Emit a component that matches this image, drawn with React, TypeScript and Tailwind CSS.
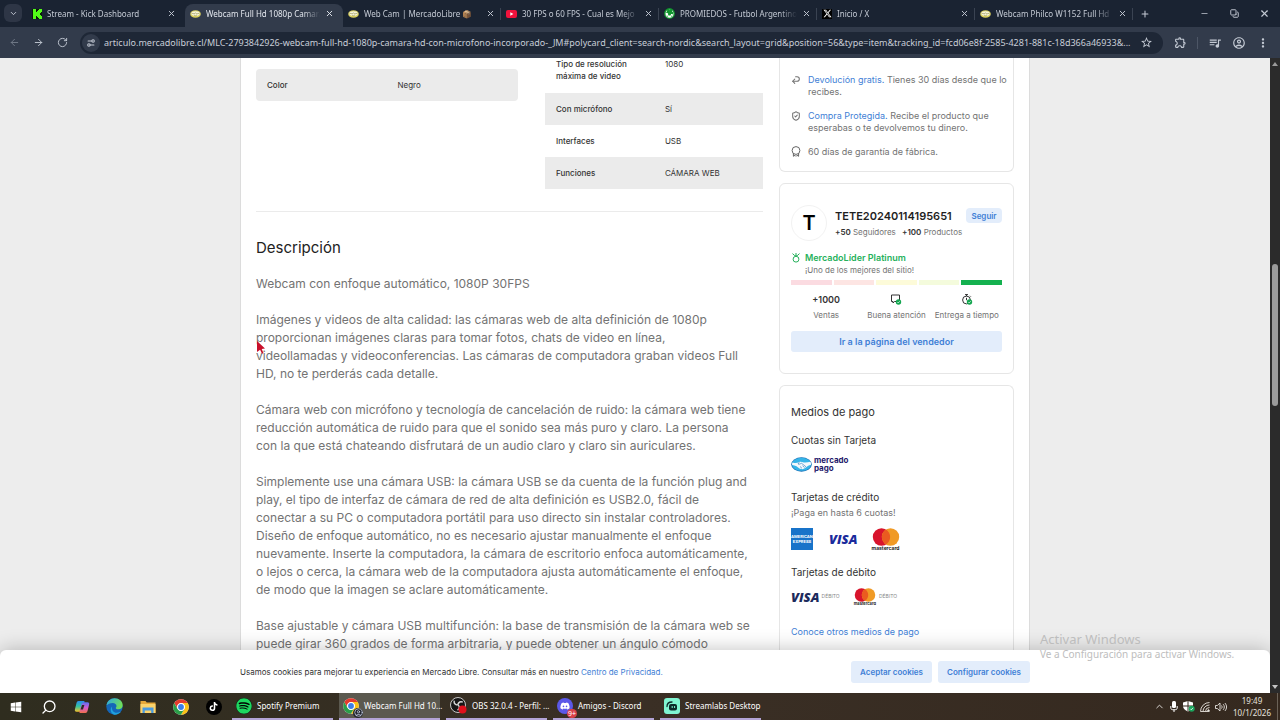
import React from 'react';
import { ArrowLeft, ArrowRight, ChevronDown, ChevronUp, CircleUser, Copy, Minus, Plus, RotateCw, Search, Settings2, ShieldCheck, Undo2, X } from 'lucide-react';
import { FaDiscord, FaSpotify, FaTiktok, FaWindows, FaXTwitter } from 'react-icons/fa6';
import { MdMoreVert, MdOutlineAccountCircle, MdOutlineExtension, MdQueueMusic, MdStarOutline } from 'react-icons/md';

const uiFont = "font-['Noto_Sans','Open_Sans',sans-serif]";
const pageFont = "font-['Inter',sans-serif]";

// ---------- icons ----------

function KickIcon() {
  return (
    <svg viewBox="0 0 10 10" className="size-[10px] shrink-0">
      <rect width="10" height="10" fill="#0b1a0c" />
      <path d="M1 0h3v3h1V2h1V1h1V0h3v3H9v1H8v2h1v1h1v3H7V9H6V8H5V7H4v3H1z" fill="#53fc18" />
    </svg>
  );
}

function MeliIcon() {
  return (
    <svg viewBox="0 0 11 8" className="h-2 w-[11px] shrink-0">
      <ellipse cx="5.5" cy="4" rx="5.3" ry="3.8" fill="#d8cf5e" />
      <ellipse cx="5.5" cy="3.6" rx="4.2" ry="2.3" fill="#f5f3d8" />
      <path d="M1.5 3.2l2.6.6 1.3-.8 1.5.9 2.6-.7M4 5l1.2.8L7 5" stroke="#8d8a4a" strokeWidth=".6" fill="none" />
    </svg>
  );
}

function YoutubeIcon() {
  return (
    <svg viewBox="0 0 11 8" className="h-2 w-[11px] shrink-0">
      <rect width="11" height="8" rx="2" fill="#f0123c" />
      <path d="M4.3 2.2v3.6L7.4 4z" fill="#fff" />
    </svg>
  );
}

function BallIcon() {
  return (
    <svg viewBox="0 0 11 11" className="size-[11px] shrink-0">
      <circle cx="5.5" cy="5.5" r="5.4" fill="#11962f" />
      <circle cx="5.5" cy="5.8" r="4" fill="#fff" />
      <path d="M5.5 4l1.8 1.3-.7 2.1H4.4l-.7-2.1zM1.5 4.5l1.5-1 .2-1.8 1.6-.4.7 1 .9-1 1.6.5.1 1.7 1.3 1-.5 2 -.9-.6M2 8l1.4-.6.9 1.7M6.8 9.1l.7-1.5 1.5.4" fill="#11962f" />
    </svg>
  );
}

function XIcon() {
  return (
    <span className="flex size-[10px] shrink-0 items-center justify-center bg-black text-white">
      <FaXTwitter size={9} />
    </span>
  );
}

function CopilotIcon() {
  return (
    <svg viewBox="0 0 16 16" className="size-4">
      <defs>
        <linearGradient id="cop1" x1="0" y1="0" x2="0" y2="1">
          <stop offset="0" stopColor="#2a8bf0" />
          <stop offset=".5" stopColor="#35c4a0" />
          <stop offset="1" stopColor="#f2c02c" />
        </linearGradient>
        <linearGradient id="cop2" x1="0" y1="0" x2="0" y2="1">
          <stop offset="0" stopColor="#5a6ff0" />
          <stop offset=".5" stopColor="#d65bd0" />
          <stop offset="1" stopColor="#f0704a" />
        </linearGradient>
      </defs>
      <path d="M4.5 2h5c1 0 1.300.6 1 1.500L8.300 11c-.4 1.200-1 1.700-2 1.700H2.500C1 12.700.5 11.700 1 10l1.500-6c.3-1.300 1-2 2-2z" fill="url(#cop1)" />
      <path d="M9.700 3.300h3.800c1.500 0 2 1 1.500 2.700l-1.500 6c-.3 1.300-1 2-2 2h-5c-1 0-1.300-.6-1-1.500L7.700 5c.4-1.200 1-1.700 2-1.700z" fill="url(#cop2)" />
      <path d="M8 6h2.400L9 10.500H6.500z" fill="#2f2d22" />
    </svg>
  );
}

function EdgeIcon() {
  return (
    <svg viewBox="0 0 17 17" className="size-[17px]">
      <defs>
        <linearGradient id="edge" x1="0" y1="0" x2="1" y2=".4">
          <stop offset="0" stopColor="#2aa7e8" />
          <stop offset="1" stopColor="#6fdc5a" />
        </linearGradient>
      </defs>
      <circle cx="8.500" cy="8.500" r="8.200" fill="#1466b8" />
      <path d="M.4 7.600C1 3.200 4.400.3 8.600.3c4.600 0 8.100 3.200 8.100 6.900 0 2.400-1.900 4-4.200 4-1.700 0-2.700-.7-2.700-1.300 0-.5.7-.8.7-1.900 0-1.600-1.500-3-3.700-3C3.900 5 1.400 6.300.4 7.600z" fill="url(#edge)" />
      <path d="M6 8.500c-.6 3.500 1.500 6.300 4.700 6.300 1.700 0 3.200-.5 4.300-1.200-1.500 2.300-4 3.300-6.500 3.100C4.900 16.300 3.500 11 6 8.500z" fill="#1fa2dd" />
    </svg>
  );
}

function FolderIcon() {
  return (
    <svg viewBox="0 0 16 14" className="h-[14px] w-4">
      <path d="M.5 1h5l1.200 1.500H15.500V13H.5z" fill="#e6a93a" />
      <path d="M.5 4h15v9H.5z" fill="#fad36c" />
      <path d="M2.500 7.500h11V13h-2.300v-2.500H4.800V13H2.500z" fill="#4a9be0" />
    </svg>
  );
}

function ChromeIcon() {
  return (
    <svg viewBox="0 0 16 16" className="size-4">
      <circle cx="8" cy="8" r="7.800" fill="#fff" />
      <path d="M1.250 4.100A7.800 7.800 0 0 1 14.750 4.100H8A3.900 3.900 0 0 0 4.620 9.950z" fill="#e33b2e" />
      <path d="M14.750 4.100A7.800 7.800 0 0 1 8 15.800l3.380-5.850A3.900 3.900 0 0 0 8 4.100z" fill="#fbc116" />
      <path d="M1.250 4.100l3.370 5.850a3.900 3.900 0 0 0 6.760 0L8 15.800A7.800 7.800 0 0 1 1.250 4.100z" fill="#2b9e49" />
      <circle cx="8" cy="8" r="3.700" fill="#fff" />
      <circle cx="8" cy="8" r="2.900" fill="#3b7fe8" />
    </svg>
  );
}

function ChromeProfileIcon() {
  return (
    <span className="relative block">
      <ChromeIcon />
      <span className="absolute -right-1 -bottom-1 flex size-[10px] items-center justify-center rounded-full bg-[#20242c] text-[#c9d3e6]">
        <CircleUser size={9} strokeWidth={2} />
      </span>
    </span>
  );
}

function ObsIcon() {
  return (
    <svg viewBox="0 0 17 17" className="size-[17px]">
      <circle cx="8" cy="8" r="7.500" fill="#161616" stroke="#d8d8d8" strokeWidth=".9" />
      <path d="M4.200 3.600c-.5 2.600 1 4.300 3.400 4.500M12.800 5.200C10.600 4 8.500 5 7.700 7.800M7.500 13c2.200-1 2.400-3.200.7-5" fill="none" stroke="#d8d8d8" strokeWidth="1.400" />
      <circle cx="12.500" cy="12.500" r="4" fill="#e0101c" />
    </svg>
  );
}

function DiscordIcon() {
  return (
    <span className="relative flex size-4 items-center justify-center rounded-full bg-[#5b58e8] text-white">
      <FaDiscord size={10} />
      <span className="absolute -right-1 -bottom-1 flex h-[9px] w-[10px] items-center justify-center rounded-full bg-[#d8404a] text-[7px] leading-none">
        9+
      </span>
    </span>
  );
}

function StreamlabsIcon() {
  return (
    <svg viewBox="0 0 16 16" className="size-4">
      <rect width="16" height="16" rx="3" fill="#80f5d2" />
      <rect x="5" y="6" width="8" height="6.500" rx="2" fill="#0c2a2a" />
      <path d="M3 8.500C3 5.500 5 4 8 4" fill="none" stroke="#0c2a2a" strokeWidth="1.300" strokeLinecap="round" />
      <path d="M8.200 8v2M10.600 8v2" stroke="#80f5d2" strokeWidth="1" />
    </svg>
  );
}

function WarrantyIcon() {
  return (
    <svg viewBox="0 0 10 11" className="h-[11px] w-[10px] shrink-0" fill="none" stroke="#666" strokeWidth="1">
      <circle cx="5" cy="4.500" r="3.900" />
      <path d="M2.400 7.500v2.800l1.600-1 .6 1M7.600 7.500v2.800l-1.600-1-.6 1" />
    </svg>
  );
}

function MedalIcon() {
  return (
    <svg viewBox="0 0 8 10" className="mt-px h-[10px] w-2 shrink-0" fill="none" stroke="#27b15c" strokeWidth="1">
      <circle cx="4" cy="6.200" r="2.900" />
      <path d="M.5.600L2.800 2.700H5.200L7.500.6M3 1h2" />
    </svg>
  );
}

function CheckBadge() {
  return (
    <>
      <circle cx="8.500" cy="8" r="2.700" fill="#14a650" />
      <path d="M7.300 8l.9.9 1.500-1.600" fill="none" stroke="#fff" strokeWidth=".7" />
    </>
  );
}

function ServiceIcon() {
  return (
    <svg viewBox="0 0 12 11" className="h-[11px] w-3">
      <path d="M1.500 1h8v6.500H4.500L3 9V7.500H1.500z" fill="none" stroke="#333" strokeWidth="1" />
      <CheckBadge />
    </svg>
  );
}

function TimeIcon() {
  return (
    <svg viewBox="0 0 12 11" className="h-[11px] w-3">
      <g fill="none" stroke="#333" strokeWidth="1">
        <circle cx="5.500" cy="6" r="3.900" />
        <path d="M4 .6h3M5.500.6v1.500M5.500 3.800v2.400M9 1.800l.8.8" />
      </g>
      <CheckBadge />
    </svg>
  );
}

function MercadoPagoLogo() {
  return (
    <div className="flex items-center gap-[2px] text-[#1f1a6b]">
      <svg viewBox="0 0 21 15" className="h-[15px] w-[21px]">
        <ellipse cx="10.500" cy="7.500" rx="10.300" ry="7.200" fill="#1b6fb5" />
        <ellipse cx="10.500" cy="7.300" rx="9.600" ry="6.500" fill="#35b4e8" />
        <path d="M1.500 5.400c3 .9 4.500.5 6.800-.4 1.500-.5 3 .3 4.500.5 2.200.3 4.300-.2 6.600-.7.8 1.300.8 2.500.4 3.200-2 .2-3.300 1.300-4.700 2.300-1.500 1.200-2.800 2-4.600 1.800C8 12 7.500 10.500 5.500 9.300 4 8.600 2.500 8.300 1.200 8c-.3-1 0-2 .3-2.600z" fill="#f3f8fc" />
        <path d="M8.300 5.200L7 7c1.500.7 2.600-.5 3.600-.7L15 9.800M9 9.500l2 1.800M11.500 8.600l2 2" fill="none" stroke="#1b6fb5" strokeWidth=".6" />
      </svg>
      <div className="flex flex-col text-[8px] leading-[8px] font-bold">
        <span>mercado</span>
        <span>pago</span>
      </div>
    </div>
  );
}

function MastercardCircles({ className }: { className: string }) {
  return (
    <svg viewBox="0 0 28 18" className={className}>
      <circle cx="9.500" cy="9" r="8.700" fill="#d8142c" />
      <circle cx="18.500" cy="9" r="8.700" fill="#f09a25" />
      <path d="M14 1.600a8.700 8.700 0 0 1 0 14.800 8.700 8.700 0 0 1 0-14.800z" fill="#ea5b20" />
    </svg>
  );
}

// ---------- browser ----------

const tabs = [
  { title: 'Stream - Kick Dashboard', icon: <KickIcon /> },
  { title: 'Webcam Full Hd 1080p Camara', icon: <MeliIcon />, active: true },
  { title: 'Web Cam | MercadoLibre 📦', icon: <MeliIcon /> },
  { title: '30 FPS o 60 FPS - Cual es Mejo', icon: <YoutubeIcon /> },
  { title: 'PROMIEDOS - Futbol Argentino', icon: <BallIcon /> },
  { title: 'Inicio / X', icon: <XIcon /> },
  { title: 'Webcam Philco W1152 Full Hd', icon: <MeliIcon /> },
];

function TabStrip() {
  return (
    <div className="flex h-[27px] items-stretch bg-[#1a2332] pr-px pl-1 text-[#c4cad4]">
      <button aria-label="Buscar pestañas" className="mt-1 mr-[5px] flex size-[18px] items-center justify-center rounded-md bg-[#2e3646]">
        <ChevronDown size={9} strokeWidth={2.500} />
      </button>
      <div className="flex min-w-0 flex-1">
        {tabs.map((tab, i) => (
          <div
            key={tab.title}
            className={
              tab.active
                ? 'mt-1 flex max-w-[158px] min-w-0 flex-1 items-center gap-[5px] rounded-t-lg bg-[#323b4b] pr-[9px] pb-1 pl-[5px] text-[#e3e7ee]'
                : 'mt-1 flex max-w-[158px] min-w-0 flex-1 items-center gap-[5px] pr-[9px] pb-1 pl-[5px]'
            }
          >
            {tab.icon}
            <span className="min-w-0 flex-1 overflow-hidden mask-r-from-85% text-[8px] leading-[14px] whitespace-nowrap">
              {tab.title}
            </span>
            <button aria-label="Cerrar pestaña">
              <X size={9} strokeWidth={2.500} />
            </button>
            {i > 1 && <span className="-mr-[9px] h-3 w-px bg-[#3a4352]" />}
          </div>
        ))}
        <button aria-label="Nueva pestaña" className="ml-1 flex w-4 items-center justify-center">
          <Plus size={10} strokeWidth={2.500} />
        </button>
      </div>
      <div className="flex">
        <button aria-label="Minimizar" className="flex w-[30px] items-center justify-center"><Minus size={9} /></button>
        <button aria-label="Restaurar" className="flex w-[30px] items-center justify-center"><Copy size={9} strokeWidth={2.500} className="-scale-x-100 rotate-90" /></button>
        <button aria-label="Cerrar" className="flex w-[30px] items-center justify-center"><X size={11} strokeWidth={2.500} /></button>
      </div>
    </div>
  );
}

function Toolbar() {
  return (
    <div className="flex h-[31px] items-center bg-[#323b4b] pr-[9px] text-[#c4cad4]">
      <button aria-label="Atrás" className="flex w-7 justify-center text-[#737c8a]"><ArrowLeft size={11} /></button>
      <button aria-label="Adelante" className="flex w-5 justify-center"><ArrowRight size={11} /></button>
      <button aria-label="Recargar" className="flex w-7 justify-center"><RotateCw size={11} /></button>
      <div className="ml-1 flex h-[22px] min-w-0 flex-1 items-center rounded-full bg-[#1e2736] pr-[10px] pl-[2px]">
        <button aria-label="Información del sitio" className="flex size-[18px] shrink-0 items-center justify-center rounded-full bg-[#323b4b]">
          <Settings2 size={10} strokeWidth={2.500} className="-scale-y-100" />
        </button>
        <input
          aria-label="Dirección"
          className="ml-1 min-w-0 flex-1 truncate bg-transparent text-[9px] text-[#c9ced8] outline-none"
          defaultValue="articulo.mercadolibre.cl/MLC-2793842926-webcam-full-hd-1080p-camara-hd-con-microfono-incorporado-_JM#polycard_client=search-nordic&search_layout=grid&position=56&type=item&tracking_id=fcd06e8f-2585-4281-881c-18d366a46933&..."
        />
        <button aria-label="Favorito" className="ml-2"><MdStarOutline size={13} /></button>
      </div>
      <button aria-label="Extensiones" className="ml-[9px] flex w-4 justify-center"><MdOutlineExtension size={13} /></button>
      <span className="mx-[9px] h-3 w-px bg-[#4d5666]" />
      <button aria-label="Multimedia" className="flex w-4 justify-center"><MdQueueMusic size={14} /></button>
      <button aria-label="Perfil" className="ml-2 flex w-4 justify-center"><MdOutlineAccountCircle size={14} /></button>
      <button aria-label="Menú" className="ml-2 flex w-4 justify-center"><MdMoreVert size={14} /></button>
    </div>
  );
}

// ---------- page ----------

function Specs() {
  const rows = [
    ['Con micrófono', 'Sí'],
    ['Interfaces', 'USB'],
    ['Funciones', 'CÁMARA WEB'],
  ];
  return (
    <div className="flex items-start justify-between border-b border-[#ebebeb] pb-[22px] text-[8px] leading-3 text-[#333]">
      <table className="mt-[11px] w-[262px] table-fixed">
        <tbody>
          <tr className="h-8 bg-[#ebebeb]">
            <th scope="row" className="w-[54%] rounded-l-sm pl-[11px] text-left font-medium">Color</th>
            <td className="rounded-r-sm">Negro</td>
          </tr>
        </tbody>
      </table>
      <table className="w-[218px] table-fixed">
        <tbody>
          <tr className="h-[35px] align-top">
            <th scope="row" className="w-[55%] pl-[11px] text-left font-medium">Tipo de resolución<br />máxima de video</th>
            <td>1080</td>
          </tr>
          {rows.map(([name, value]) => (
            <tr key={name} className="h-8 odd:bg-white even:bg-[#ebebeb]">
              <th scope="row" className="pl-[11px] text-left font-medium">{name}</th>
              <td>{value}</td>
            </tr>
          ))}
        </tbody>
      </table>
    </div>
  );
}

const description = `Webcam con enfoque automático, 1080P 30FPS

Imágenes y videos de alta calidad: las cámaras web de alta definición de 1080p
proporcionan imágenes claras para tomar fotos, chats de video en línea,
videollamadas y videoconferencias. Las cámaras de computadora graban videos Full
HD, no te perderás cada detalle.

Cámara web con micrófono y tecnología de cancelación de ruido: la cámara web tiene
reducción automática de ruido para que el sonido sea más puro y claro. La persona
con la que está chateando disfrutará de un audio claro y claro sin auriculares.

Simplemente use una cámara USB: la cámara USB se da cuenta de la función plug and
play, el tipo de interfaz de cámara de red de alta definición es USB2.0, fácil de
conectar a su PC o computadora portátil para uso directo sin instalar controladores.
Diseño de enfoque automático, no es necesario ajustar manualmente el enfoque
nuevamente. Inserte la computadora, la cámara de escritorio enfoca automáticamente,
o lejos o cerca, la cámara web de la computadora ajusta automáticamente el enfoque,
de modo que la imagen se aclare automáticamente.

Base ajustable y cámara USB multifunción: la base de transmisión de la cámara web se
puede girar 360 grados de forma arbitraria, y puede obtener un ángulo cómodo`;

function Benefits() {
  return (
    <ul className="flex flex-col gap-3 rounded-b-md border border-t-0 border-[#e6e6e6] px-[11px] pt-4 pb-[13px] text-[9px] leading-3 whitespace-nowrap text-[#737373]">
      <li className="flex gap-[7px]">
        <Undo2 size={10} strokeWidth={2.500} className="mt-px shrink-0 -scale-y-100" />
        <p><a href="#devolucion" className="text-[#3f7fd6]">Devolución gratis.</a> Tienes 30 días desde que lo<br />recibes.</p>
      </li>
      <li className="flex gap-[7px]">
        <ShieldCheck size={10} strokeWidth={2.500} className="mt-px shrink-0" />
        <p><a href="#compra" className="text-[#3f7fd6]">Compra Protegida.</a> Recibe el producto que<br />esperabas o te devolvemos tu dinero.</p>
      </li>
      <li className="flex gap-[7px]">
        <WarrantyIcon />
        <p>60 días de garantía de fábrica.</p>
      </li>
    </ul>
  );
}

function Seller() {
  return (
    <section className="rounded-md border border-[#e6e6e6] px-[11px] pt-[21px] pb-[21px] text-[8px] text-[#737373]">
      <div className="flex items-start">
        <div className="flex size-9 shrink-0 items-center justify-center rounded-full border border-[#f2f2f2] text-[20px] font-semibold text-black">T</div>
        <div className="ml-2 flex-1">
          <h2 className="pt-[3px] text-[11px] leading-4 font-semibold text-[#1f1f1f]">TETE20240114195651</h2>
          <p className="pt-[2px] leading-3 whitespace-nowrap">
            <b className="font-semibold text-[#333]">+50</b> Seguidores <b className="ml-1 font-semibold text-[#333]">+100</b> Productos
          </p>
        </div>
        <button className="mt-[3px] h-[15px] w-9 rounded-sm bg-[#e3edfb] text-[8px] font-semibold text-[#3f7fd6]">Seguir</button>
      </div>
      <div className="mt-[11px] flex gap-[5px] pl-px">
        <MedalIcon />
        <div>
          <p className="text-[9px] leading-3 font-semibold text-[#27b15c]">MercadoLíder Platinum</p>
          <p className="leading-3">¡Uno de los mejores del sitio!</p>
        </div>
      </div>
      <div className="mt-1 grid h-[5px] grid-cols-5 gap-[2px]">
        <span className="bg-[#fbdbe1]" />
        <span className="bg-[#fde5e3]" />
        <span className="bg-[#fdfbd9]" />
        <span className="bg-[#f4fbdc]" />
        <span className="bg-[#14b14f]" />
      </div>
      <dl className="mt-2 grid grid-cols-3 text-center leading-3">
        <div>
          <dt className="flex h-[13px] items-center justify-center text-[9px] font-semibold text-[#333]">+1000</dt>
          <dd className="mt-[3px]">Ventas</dd>
        </div>
        <div>
          <dt className="flex h-[13px] items-center justify-center"><ServiceIcon /></dt>
          <dd className="mt-[3px]">Buena atención</dd>
        </div>
        <div>
          <dt className="flex h-[13px] items-center justify-center"><TimeIcon /></dt>
          <dd className="mt-[3px]">Entrega a tiempo</dd>
        </div>
      </dl>
      <button className="mt-[10px] h-[21px] w-full rounded-[3px] bg-[#e3edfb] text-[9px] font-semibold text-[#3f7fd6]">Ir a la página del vendedor</button>
    </section>
  );
}

function Payments() {
  return (
    <section className="rounded-t-md border border-b-0 border-[#e6e6e6] px-[11px] pt-[18px] text-[#333]">
      <h2 className="text-[11px] leading-4">Medios de pago</h2>
      <h3 className="mt-3 text-[10px] leading-4">Cuotas sin Tarjeta</h3>
      <div className="mt-2 h-4"><MercadoPagoLogo /></div>
      <h3 className="mt-[17px] text-[10px] leading-4">Tarjetas de crédito</h3>
      <p className="mt-[2px] text-[9px] leading-3 text-[#737373]">¡Paga en hasta 6 cuotas!</p>
      <div className="mt-[9px] flex h-[22px] items-center">
        <span className="flex size-[22px] flex-col items-center justify-center bg-[#1873c9] text-[4px] leading-[5px] font-bold text-white">
          <span>AMERICAN</span>
          <span>EXPRESS</span>
        </span>
        <span className="mr-[14px] ml-4 font-['Open_Sans',sans-serif] text-[13px] leading-none font-extrabold text-[#1a2a9c] italic">VISA</span>
        <span className="flex flex-col items-center">
          <MastercardCircles className="h-[18px] w-7" />
          <span className="text-[5px] leading-[4px] font-bold text-[#222]">mastercard</span>
        </span>
      </div>
      <h3 className="mt-[14px] text-[10px] leading-4">Tarjetas de débito</h3>
      <div className="mt-2 flex h-[18px] items-center text-[5px] text-[#888]">
        <span className="mr-[2px] font-['Open_Sans',sans-serif] text-[13px] leading-none font-extrabold text-[#1c2a5c] italic">VISA</span>
        <span className="mr-[14px]">DÉBITO</span>
        <span className="flex flex-col items-center">
          <MastercardCircles className="h-[14px] w-[22px]" />
          <span className="text-[4px] leading-[4px] font-bold text-[#222]">mastercard</span>
        </span>
        <span className="ml-[3px]">DÉBITO</span>
      </div>
      <a href="#medios" className="mt-5 block pb-6 text-[9px] leading-3 text-[#3f7fd6]">Conoce otros medios de pago</a>
    </section>
  );
}

function CookieBanner() {
  return (
    <div className="absolute inset-x-0 bottom-0 rounded-t-md bg-white shadow-[0_0_20px_rgba(0,0,0,0.25)]">
      <div className="mx-auto flex h-[43px] max-w-[790px] items-center text-[8px] text-[#333]">
        <p className="flex-1">
          Usamos cookies para mejorar tu experiencia en Mercado Libre. Consultar más en nuestro{' '}
          <a href="#privacidad" className="text-[#3f7fd6]">Centro de Privacidad.</a>
        </p>
        <button className="h-[22px] w-[81px] rounded-[3px] bg-[#e3edfb] font-semibold text-[#3f7fd6]">Aceptar cookies</button>
        <button className="ml-[6px] h-[22px] w-[92px] rounded-[3px] bg-[#e3edfb] font-semibold text-[#3f7fd6]">Configurar cookies</button>
      </div>
    </div>
  );
}

function ProductPage() {
  return (
    <main className={`relative min-w-0 flex-1 overflow-hidden bg-[#ededed] ${pageFont}`}>
      <div className="mx-auto flex min-h-full max-w-[790px] gap-4 border-x border-[#dcdcdc] bg-white px-[15px]">
        <div className="min-w-0 flex-1">
          <Specs />
          <h2 className="mt-[25px] text-[15px] leading-[22px] text-[#222]">Descripción</h2>
          <p className="mt-4 text-[12px] leading-[18px] whitespace-pre text-[#737373]">{description}</p>
        </div>
        <aside className="flex w-[235px] shrink-0 flex-col gap-[11px]">
          <Benefits />
          <Seller />
          <Payments />
        </aside>
      </div>
      <CookieBanner />
    </main>
  );
}

function Scrollbar() {
  return (
    <div className="flex w-[10px] flex-col items-center justify-between bg-[#2b2b2b] py-1">
      <svg viewBox="0 0 6 4" className="h-1 w-[6px]"><path d="M0 4l3-4 3 4z" fill="#9a9a9a" /></svg>
      <div className="flex w-full flex-1 flex-col items-center">
        <span className="basis-[32%]" />
        <span className="h-[142px] w-[6px] rounded-full bg-[#9b9b9b]" />
      </div>
      <svg viewBox="0 0 6 4" className="h-1 w-[6px]"><path d="M0 0l3 4 3-4z" fill="#c4c4c4" /></svg>
    </div>
  );
}

// ---------- desktop ----------

const windows = [
  { title: 'Spotify Premium', icon: <span className="block rounded-full bg-black text-[#1ed760]"><FaSpotify size={16} /></span> },
  { title: 'Webcam Full Hd 10...', icon: <ChromeProfileIcon />, active: true },
  { title: 'OBS 32.0.4 - Perfil: ...', icon: <ObsIcon /> },
  { title: 'Amigos - Discord', icon: <DiscordIcon /> },
  { title: 'Streamlabs Desktop', icon: <StreamlabsIcon /> },
];

const pinned = [
  { name: 'Inicio', icon: <FaWindows size={12} /> },
  { name: 'Buscar', icon: <Search size={16} className="-scale-x-100" /> },
  { name: 'Copilot', icon: <CopilotIcon /> },
  { name: 'Edge', icon: <EdgeIcon /> },
  { name: 'Explorador', icon: <FolderIcon /> },
  { name: 'Chrome', icon: <ChromeIcon /> },
  { name: 'TikTok', icon: <span className="flex size-4 items-center justify-center rounded-full bg-black"><FaTiktok size={9} /></span> },
];

function Taskbar() {
  return (
    <footer className="flex h-[27px] items-stretch bg-linear-to-r from-[#2f2d1f] via-[#3a2f25] to-[#35291f] text-white">
      <nav className="mr-[2px] -ml-px flex">
        {pinned.map((app) => (
          <button key={app.name} aria-label={app.name} className="flex w-[33px] items-center justify-center">{app.icon}</button>
        ))}
      </nav>
      <div className="flex gap-[6px]">
        {windows.map((win) => (
          <button
            key={win.title}
            className={
              win.active
                ? 'flex w-[101px] items-center gap-[5px] border-b-2 border-[#b3a4d6] bg-[#5b594f] pl-1 text-[8px]'
                : 'flex w-[101px] items-center gap-[5px] border-b-2 border-[#b3a4d6] pl-1 text-[8px]'
            }
          >
            <span className="shrink-0">{win.icon}</span>
            <span className="whitespace-nowrap">{win.title}</span>
          </button>
        ))}
      </div>
      <div className="ml-auto flex items-center gap-[5px] text-[#e6e3df]">
        <ChevronUp size={11} />
        <svg viewBox="0 0 8 11" className="h-[11px] w-2"><rect x="2" width="4" height="7" rx="1.500" fill="#fff" /><path d="M.8 5v2.200c0 1 1 1.600 3.200 1.600s3.200-.6 3.200-1.600V5M4 8.800V11" fill="none" stroke="#fff" /></svg>
        <svg viewBox="0 0 12 11" className="h-[11px] w-3"><path d="M0 1.500L5 0l5 1.500V5c0 2.500-2 4.500-5 5.500C2 9.500 0 7.500 0 5z" fill="#fff" /><path d="M5 0v10M0 5h10" stroke="#35291f" /><circle cx="8.700" cy="7.700" r="3" fill="#1ba35c" /><path d="M7.300 7.800l1 1 1.700-2" fill="none" stroke="#fff" strokeWidth=".8" /></svg>
        <svg viewBox="0 0 10 10" className="size-[10px]" fill="none" stroke="#d5d0ca"><path d="M.5 9.500A9 9 0 0 1 9.500.5M3 9.500A6.500 6.500 0 0 1 9.500 3M5.500 9.500a4 4 0 0 1 4-4M.5 9.500h9" /><circle cx="8.500" cy="8.500" r=".8" fill="#fff" /></svg>
        <svg viewBox="0 0 12 10" className="h-[10px] w-3" fill="none" stroke="#e6e3df" strokeWidth=".9"><path d="M.5 3.500h1.800L5 1v8L2.300 6.500H.5zM6.500 3.500c.8 1 .8 2 0 3M8.200 2.200c1.500 1.800 1.500 3.800 0 5.600M9.900 1c2.200 2.500 2.200 5.500 0 8" /></svg>
        <div className="w-10 text-center text-[8px] leading-3">19:49<br />10/1/2026</div>
        <span className="mr-[2px] h-full w-px bg-[#6b6257]" />
      </div>
    </footer>
  );
}

export default function App() {
  return (
    <div className={`relative flex h-screen flex-col overflow-hidden ${uiFont}`}>
      <header>
        <TabStrip />
        <Toolbar />
      </header>
      <div className="flex min-h-0 flex-1">
        <ProductPage />
        <Scrollbar />
      </div>
      <Taskbar />

      <div className="pointer-events-none absolute right-12 bottom-[60px] w-48 whitespace-nowrap text-[#bdbdbd]">
        <p className="text-[13px] leading-[18px]">Activar Windows</p>
        <p className="text-[10px] leading-3">Ve a Configuración para activar Windows.</p>
      </div>
      <svg viewBox="0 0 8 13" className="pointer-events-none absolute top-[341px] left-[257px] h-[13px] w-2">
        <path d="M0 0l8 7.500-3.300.4 1.800 4-1.500.8-1.900-4L0 11z" fill="#c8102a" />
      </svg>
    </div>
  );
}
